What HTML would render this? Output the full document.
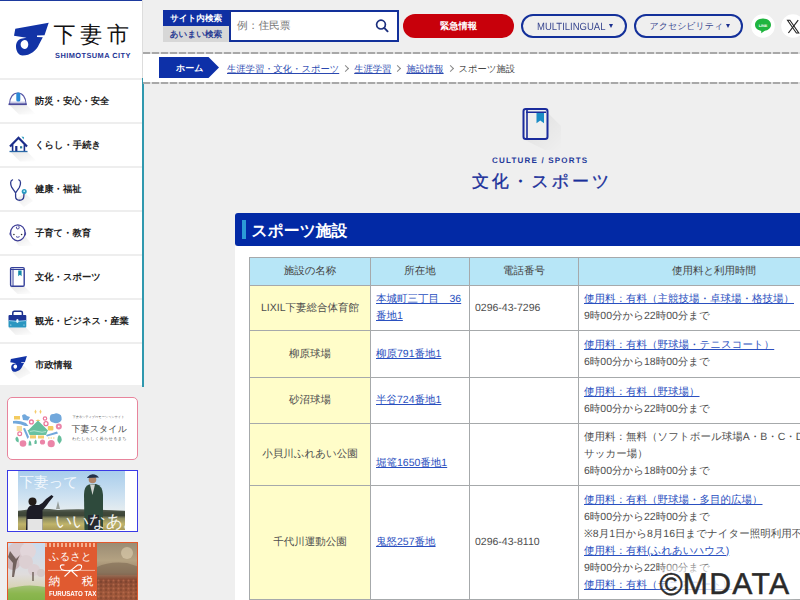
<!DOCTYPE html>
<html><head><meta charset="utf-8">
<style>
*{box-sizing:border-box;margin:0;padding:0}
html,body{width:800px;height:600px;overflow:hidden}
body{text-rendering:geometricPrecision;background:#efefef;font-family:"Liberation Sans",sans-serif;color:#333;position:relative}
.abs{position:absolute}
#side{left:0;top:0;width:142px;height:385px;background:#fff;border-top:1.5px solid #1d3a9e}
#sideline1{left:142px;top:0;width:1px;height:78px;background:#ddd}
#sideline2{left:142px;top:78px;width:1.6px;height:309px;background:#2f98ae}
.mi{position:absolute;left:0;width:142px;height:44px;border-top:2px solid #eee}
.mi span{position:absolute;left:35px;top:14px;font-size:9.3px;font-weight:bold;color:#222;white-space:nowrap;line-height:14px}
.mi svg{position:absolute;left:4px;top:6px}
#hdr .tab1{left:163px;top:10px;width:66px;height:16px;background:#0f2fa3;color:#fff;font-size:8.6px;font-weight:bold;text-align:center;line-height:16px}
#hdr .tab2{left:163px;top:26px;width:66px;height:16px;background:#d7d7d7;color:#2b3d94;font-size:8.6px;font-weight:bold;text-align:center;line-height:16px}
.sbox{left:229px;top:10px;width:170px;height:32px;border:2px solid #12309a;background:#fff}
.sbox span{position:absolute;left:6px;top:6px;font-size:10.7px;color:#777;line-height:16px}
.btn{position:absolute;top:14px;height:24px;border-radius:12px;font-size:11px;line-height:20px;text-align:center;white-space:nowrap}
.red{left:403px;width:111px;background:#c8000b;color:#fff;font-weight:bold;font-size:9.3px;line-height:24px}
.ol{border:2px solid #13309a;color:#3c4b98}
.dash{left:143px;width:657px;height:2px;background:repeating-linear-gradient(90deg,#a8a8a8 0 7px,#dedede 7px 9px)}
#crumb{left:143px;top:54px;width:657px;height:28px;background:#fff}
.crumb a{color:#2a48b0;text-decoration:underline}
table{border-collapse:collapse;table-layout:fixed;font-size:10.5px;color:#4e4e4e}
td,th{border:1px solid #a6a9ab;line-height:17px;padding:0 5px;white-space:nowrap;vertical-align:middle}
th{background:#b7e6f7;font-weight:normal;text-align:center;color:#444}
td.n{background:#fffdc9;text-align:center}
td a{color:#2a50c0;text-decoration:underline}
.chev{display:inline-block;width:5px;height:5px;border-right:1.3px solid #888;border-top:1.3px solid #888;transform:rotate(45deg);margin:0 6px 1px 4px}
.tri{width:0;height:0;border-left:2.8px solid transparent;border-right:2.8px solid transparent;border-top:4.2px solid #1a2f8f}
</style></head><body>

<!-- sidebar -->
<div id="side" class="abs"></div>
<div id="sideline1" class="abs"></div>
<div id="sideline2" class="abs"></div>

<!-- logo -->
<svg class="abs" style="left:10px;top:20px" width="40" height="40" viewBox="0 0 40 40">
<path fill="#1233a6" fill-rule="evenodd" d="M5.3 8.7L38.7 2.7L34.5 15.3L27 15.6L27 17L32.8 17.2L29 24.5C26.5 30.5 20.5 35.5 12.5 35.5C8.5 35.5 6 31 6 26.5C6 22.5 8 19.6 11 18.8L16.5 17.7L4 15.7Z M14.6 20C12.2 20 10.6 22.2 10.6 24.6C10.6 27.1 12.3 28.9 14.5 28.9C16.7 28.9 18.3 26.9 18.3 24.4C18.3 21.9 16.9 20 14.6 20Z"/>
</svg>
<div class="abs" style="left:53.5px;top:21.5px;font-size:22px;letter-spacing:4.8px;color:#111;line-height:26px;white-space:nowrap">下妻市</div>
<div class="abs" style="left:55px;top:50.8px;font-size:7.4px;font-weight:bold;letter-spacing:.45px;color:#1d3595;line-height:10px;white-space:nowrap">SHIMOTSUMA CITY</div>

<!-- menu -->
<div class="mi" style="top:78px"><span>防災・安心・安全</span></div>
<div class="mi" style="top:122px"><span>くらし・手続き</span></div>
<div class="mi" style="top:166px"><span>健康・福祉</span></div>
<div class="mi" style="top:210px"><span>子育て・教育</span></div>
<div class="mi" style="top:254px"><span>文化・スポーツ</span></div>
<div class="mi" style="top:298px"><span>観光・ビジネス・産業</span></div>
<div class="mi" style="top:342px"><span>市政情報</span></div>


<!-- sidebar icons -->
<svg class="abs" style="left:0;top:0" width="143" height="385" viewBox="0 0 143 385">
<defs><linearGradient id="sh" x1="0" y1="0" x2="1" y2="1"><stop offset="0" stop-color="#000" stop-opacity=".10"/><stop offset="1" stop-color="#000" stop-opacity="0"/></linearGradient></defs>
<g fill="url(#sh)">
<path d="M9 104.5L26 104.5L36 114.5L19 114.5Z"/>
<path d="M10 151.5L27 151.5L37 161.5L20 161.5Z"/>
<path d="M16 199L25 193L33 201L24 207Z"/>
<path d="M11 236L25 236L33 246L19 246Z"/>
<path d="M10 286.5L24.5 286.5L32 294L17.5 294Z"/>
<path d="M8.5 327.5L26 327.5L33 335L15.5 335Z"/>
<path d="M12 372L24 366L31 373L19 379Z"/>
</g>
<!-- helmet -->
<path d="M9.5 104C9.5 97.5 13 93 17.8 93C22.6 93 26 97.5 26 104Z" fill="#fff" stroke="#5a5aa8" stroke-width="1.2"/>
<path d="M8.5 104.3H26.8" stroke="#4a4a9a" stroke-width="1.6"/>
<path d="M9.5 102.2H26" stroke="#9aa0d0" stroke-width="0.8"/>
<rect x="16.3" y="92.5" width="4" height="9" rx="1.5" fill="#2a8ad6"/>
<!-- house -->
<path d="M10 146.5L18.5 137.8L27 146.5" fill="none" stroke="#1b2d8a" stroke-width="2.2" stroke-linejoin="miter"/>
<path d="M12.6 144.5V151M24.4 144.5V151" stroke="#1b2d8a" stroke-width="1.6"/>
<path d="M9.5 151.5H27.5" stroke="#2a6aa8" stroke-width="1.3"/>
<rect x="15.2" y="146" width="2.2" height="5.2" fill="#1b2d8a"/>
<rect x="20" y="146.2" width="2.2" height="2.2" fill="#2a7a9a"/>
<path d="M21.5 136.5L24 137L23.5 139.5Z" fill="#2a9ac0"/>
<!-- stethoscope -->
<path d="M12.5 179.8C10 180.5 10.3 184.5 11.8 187.5L15.6 192.8L19.3 187.5C20.8 184.5 21.2 180.5 18.8 179.8M15.6 192.8V196.5C15.6 201.5 23.5 201.5 23.8 196.5L24 193.5" fill="none" stroke="#2e3b8e" stroke-width="1.3" stroke-linecap="round"/>
<circle cx="24.2" cy="191.4" r="2.5" fill="#2a9ac0"/><circle cx="24.2" cy="191.2" r="0.9" fill="#bfefff"/>
<!-- baby -->
<ellipse cx="17.8" cy="232.8" rx="7.2" ry="8" fill="#fff" stroke="#3c3c96" stroke-width="1.2"/>
<path d="M10.7 231.5C9 232.5 9 235 10.7 236Z M24.9 231.5C26.6 232.5 26.6 235 24.9 236Z" fill="#4a4aa0"/>
<path d="M17.2 226.5C16 226.8 16 229 17.8 229C19.5 229 19.6 226.8 18.2 225.5" fill="none" stroke="#3c3c96" stroke-width="1"/>
<circle cx="13.9" cy="234.5" r="0.8" fill="#333"/><circle cx="21.6" cy="234.5" r="0.8" fill="#333"/>
<path d="M16 236.6Q17.8 238 19.6 236.6" fill="none" stroke="#4a4aa0" stroke-width="1"/>
<!-- book -->
<rect x="10.6" y="267.6" width="13.6" height="18.6" rx="1.2" fill="#fff" stroke="#34409a" stroke-width="1.4"/>
<path d="M13 268.5V286M10.8 269.5H24" stroke="#34409a" stroke-width="1"/>
<path d="M18.2 270.5H21.6V276.2L19.9 274.8L18.2 276.2Z" fill="#158aa8"/>
<!-- briefcase -->
<path d="M12.8 315.5V312.8Q12.8 311.2 14.4 311.2H20.8Q22.4 311.2 22.4 312.8V315.5" fill="none" stroke="#1b2f8a" stroke-width="1.5"/>
<path d="M8.5 316Q8.5 315 9.5 315H25.3Q26.3 315 26.3 316V321H8.5Z" fill="#1d3396"/>
<path d="M8.5 320.5H26.3V326.5Q26.3 327.5 25.3 327.5H9.5Q8.5 327.5 8.5 326.5Z" fill="#2a96c0"/>
<path d="M8.5 320.5Q17.4 322.5 26.3 320.5" fill="none" stroke="#bfe6ff" stroke-width="0.7"/>
<ellipse cx="17.4" cy="321" rx="1.2" ry="1.9" fill="#e8f8ff"/>
<circle cx="10.8" cy="325" r="0.6" fill="#e8f8ff"/><circle cx="24" cy="325" r="0.6" fill="#e8f8ff"/>
<!-- small logo -->
<g transform="translate(8.33 354.8) scale(0.48)">
<path fill="#1233a6" fill-rule="evenodd" d="M5.3 8.7L38.7 2.7L34.5 15.3L27 15.6L27 17L32.8 17.2L29 24.5C26.5 30.5 20.5 35.5 12.5 35.5C8.5 35.5 6 31 6 26.5C6 22.5 8 19.6 11 18.8L16.5 17.7L4 15.7Z M14.6 20C12.2 20 10.6 22.2 10.6 24.6C10.6 27.1 12.3 28.9 14.5 28.9C16.7 28.9 18.3 26.9 18.3 24.4C18.3 21.9 16.9 20 14.6 20Z"/>
</g>
</svg>
<!-- banners -->
<div class="abs" style="left:6.5px;top:397px;width:131.5px;height:63px;border:1.6px solid #e8849c;border-radius:5px;background:#fff"></div>
<svg class="abs" style="left:10px;top:405px" width="56" height="45" viewBox="0 0 56 45">
<g opacity=".85">
<path d="M25.5 4.5L26.6 6.7L25.5 9L24.4 6.7Z M30.5 4.5L31.6 6.7L30.5 9L29.4 6.7Z" fill="#f4c454"/>
<path d="M25.5 16Q28 13 30.5 16Z" fill="#f4c454"/>
<path d="M28 15.5L37.5 25H18.5Z" fill="#4cb38c"/>
<path d="M17.5 25H38L36 30H19.5Z" fill="#52b894"/>
<path d="M20 26.5Q24 25 28 26.5Q32 28 36 26.5" fill="none" stroke="#c8f0e0" stroke-width=".7"/>
<rect x="4" y="11" width="6" height="3.5" fill="#f2c244"/>
<path d="M12 10.5Q15 8 17 11L20 12L18 15.5L13 15Z" fill="#5a9ad6"/>
<path d="M3 16Q9 15 16 18L18.5 21L15 21Q10 18 3 18.5Z" fill="#5a9ad6"/>
<circle cx="21.4" cy="16.9" r="1.9" fill="none" stroke="#e8608a" stroke-width="1.3"/>
<circle cx="35" cy="13.5" r="1.7" fill="none" stroke="#e8608a" stroke-width="1.2"/>
<circle cx="36" cy="18.7" r="2" fill="none" stroke="#e8608a" stroke-width="1.3"/>
<path d="M40 12Q40 8.5 44 9Q46 7.5 49 9Q52 10 51.5 13Q52.5 16 49 17.5Q46 19 43 17.5Q39 16.5 40 12Z" fill="#5a9ad6"/>
<rect x="37.8" y="21" width="5.6" height="4.4" rx="1" fill="#f2c244"/>
<circle cx="48.8" cy="21.4" r="3" fill="#e8709a"/><circle cx="48.8" cy="21.4" r=".9" fill="#fff"/>
<path d="M36 30L47 26.5L48 28.5L37 31.5Z" fill="#5a9ad6"/>
<path d="M6.7 21H12V26.2H6.7Z" fill="#f6d88a"/>
<circle cx="9.7" cy="28.8" r="1.9" fill="none" stroke="#e8608a" stroke-width="1.2"/>
<path d="M13 23.5L15 23L19 32L17.5 34Z" fill="#5a9ad6"/>
<path d="M20 30.2H26V33.5H20Z M28 30.5H34V33.5H28Z" fill="#f4c454"/>
<path d="M7 31.5Q9.5 34 8.5 37.5Q5 36.5 5.5 33Z" fill="#4cb38c"/>
<circle cx="13" cy="38.5" r="3.3" fill="#e8709a"/>
<path d="M19.8 35.2Q22 37 21.5 40.5H18.5Q18 37 19.8 35.2Z" fill="#4cb38c"/>
<path d="M25.5 34.5Q27.5 36 26.5 39H24.5Q23.8 36 25.5 34.5Z" fill="#4cb38c"/>
<circle cx="32.5" cy="37" r="2.6" fill="#e8709a"/>
<circle cx="41.2" cy="38.7" r="3.6" fill="#e8709a"/>
<path d="M49 30Q52.5 32 51.5 36L49.5 39L47.5 36Q47 32 49 30Z" fill="#4cb38c"/>
<path d="M38 33H45" stroke="#f4c454" stroke-width="1" stroke-dasharray="1.5 1"/>
</g>
</svg>
<div class="abs" style="left:72.5px;top:414.5px;font-size:3.2px;color:#555;line-height:5px;white-space:nowrap">下妻市シティプロモーションサイト</div>
<div class="abs" style="left:71.5px;top:423px;font-size:9px;color:#444;line-height:12px;white-space:nowrap;letter-spacing:.1px">下妻スタイル</div>
<div class="abs" style="left:72px;top:436px;font-size:4.2px;color:#555;line-height:5px;white-space:nowrap;letter-spacing:.3px">わたしらしく暮らせるまち</div>

<div class="abs" style="left:6.5px;top:470px;width:131.5px;height:62px;border:1.6px solid #3a3ae6;background:#fff;overflow:hidden">
<svg class="abs" style="left:10.4px;top:0" width="107.5" height="59" viewBox="0 0 107.5 59">
<defs><linearGradient id="sky" x1="0" y1="0" x2="0" y2="1">
<stop offset="0" stop-color="#a8cdec"/><stop offset=".45" stop-color="#cfe2f1"/><stop offset=".66" stop-color="#e4ecf0"/><stop offset=".7" stop-color="#6a6e60"/><stop offset=".76" stop-color="#484c3c"/><stop offset=".8" stop-color="#8a8a60"/><stop offset=".9" stop-color="#c0b46a"/><stop offset="1" stop-color="#a89a58"/></linearGradient></defs>
<rect width="107.5" height="59" fill="url(#sky)"/>
<path d="M0 40Q20 36 40 39Q60 37 107.5 40V45H0Z" fill="#3c4436" opacity=".85"/>
<path d="M38 38L40 30L42 38Z" fill="#6a6e64" opacity=".6"/>
<path d="M8 59L8.5 43Q9 35 14.5 34L21 34Q25 32 28 28L33.5 24L35.5 25.5L31 31Q27 37 24.5 39L24.5 59Z" fill="#1c1c26"/>
<path d="M9.5 48H24.5V59H9.5Z" fill="#e4e4e4"/>
<circle cx="14.5" cy="30.5" r="4" fill="#221c18"/>
<path d="M66.5 59L66 24Q66 15 71 13.5L78 13Q84.5 14.5 85 24L85 59Z" fill="#2e4a3c"/>
<path d="M72 13.5L74.5 24L77 13.5Z" fill="#d0d4d0"/>
<path d="M70 59V44H81V59Z" fill="#252a30"/>
<circle cx="74.5" cy="8.5" r="3.8" fill="#b08468"/>
<path d="M69.5 6Q73 1.5 79 4.5L81 6.5L69 7Z" fill="#22304a"/>
<text x="1.5" y="16" font-size="14.5" fill="#fff" fill-opacity=".85" font-family="Liberation Serif, serif">下妻って</text>
<text x="37" y="56" font-size="17" fill="#fff" fill-opacity=".92" font-family="Liberation Serif, serif" letter-spacing="-.5">いいなあ。</text>
</svg>
</div>

<div class="abs" style="left:6.5px;top:542px;width:131.5px;height:70px;border:1.6px solid #e2592c;background:#e05a30;overflow:hidden">
<svg class="abs" style="left:0;top:0" width="37" height="70" viewBox="0 0 37 70">
<defs><linearGradient id="lp" x1="0" y1="0" x2="0" y2="1"><stop offset="0" stop-color="#c8dcf0"/><stop offset=".45" stop-color="#e0dcdc"/><stop offset=".62" stop-color="#d8d4b8"/><stop offset=".72" stop-color="#a8c068"/><stop offset="1" stop-color="#68a030"/></linearGradient></defs>
<rect width="37" height="70" fill="url(#lp)"/>
<circle cx="10" cy="10" r="11" fill="#d8c8cc"/><circle cx="20" cy="8" r="8" fill="#e2d6da"/><circle cx="5" cy="20" r="7" fill="#cbb8bc"/><circle cx="18" cy="19" r="7" fill="#dccfd2"/>
<path d="M2 8L8 16L12 12L9 18L6 34L4 34L5 20L0 14Z" fill="#5a4a44" opacity=".8"/>
<circle cx="26" cy="27" r="6" fill="#ddd0d4"/><circle cx="33" cy="30" r="4" fill="#d4c8c8"/>
<path d="M25 38V29" stroke="#5a4a40" stroke-width="1.2"/>
<path d="M0 46Q18 40 37 44V70H0Z" fill="#7ab040" opacity=".6"/>
</svg>
<svg class="abs" style="left:89.5px;top:0" width="42" height="70" viewBox="0 0 42 70">
<defs><linearGradient id="rp" x1="0" y1="0" x2="0" y2="1"><stop offset="0" stop-color="#9a8c74"/><stop offset=".25" stop-color="#b4a282"/><stop offset=".42" stop-color="#9a8268"/><stop offset=".52" stop-color="#8a4a34"/><stop offset=".75" stop-color="#a0583a"/><stop offset="1" stop-color="#7a4030"/></linearGradient>
<pattern id="fl" width="5" height="4" patternUnits="userSpaceOnUse"><circle cx="1.5" cy="1.5" r="1" fill="#c07050" opacity=".7"/><circle cx="4" cy="3" r=".8" fill="#5a3020" opacity=".6"/></pattern></defs>
<rect width="42" height="70" fill="url(#rp)"/>
<path d="M0 24Q12 18 30 20L42 24V32H0Z" fill="#7a6650" opacity=".55"/>
<circle cx="30" cy="10" r="6" fill="#e0d0b0" opacity=".6"/>
<rect y="36" width="42" height="34" fill="url(#fl)"/>
</svg>
<div class="abs" style="left:37px;top:0;width:52.5px;height:3.5px;background:repeating-linear-gradient(90deg,#f4b090 0 2px,#e05a30 2px 4px)"></div>
<div class="abs" style="left:41.3px;top:6.5px;font-size:10.5px;color:#fff;line-height:14px;white-space:nowrap">ふるさと</div>
<svg class="abs" style="left:37px;top:19px" width="52.5" height="16" viewBox="0 0 52.5 16"><path d="M3 8.4H50" stroke="#fbd8c8" stroke-width=".7"/><path d="M19.5 3Q13 2 16.5 7.5Q21.5 9.5 26 8.4Q30.5 9.5 35.5 7.5Q39 2 32.5 3L26 8.4L19.5 14.5M26 8.4L32.5 14.5" fill="none" stroke="#fff" stroke-width="1.1"/></svg>
<div class="abs" style="left:41.3px;top:32px;font-size:11.5px;color:#fff;line-height:14px;white-space:nowrap;letter-spacing:21.5px">納税</div>
<div class="abs" style="left:41.5px;top:47px;font-size:7.2px;font-weight:bold;color:#fff;line-height:8px;white-space:nowrap;transform-origin:0 0;transform:scaleX(.86)">FURUSATO TAX</div>
</div>

<!-- header -->
<div id="hdr">
<div class="abs tab1">サイト内検索</div>
<div class="abs tab2">あいまい検索</div>
<div class="abs sbox"><span>例：住民票</span>
<svg class="abs" style="left:142px;top:6px" width="16" height="16" viewBox="0 0 16 16"><circle cx="8" cy="6.6" r="4.4" fill="none" stroke="#1b2f7e" stroke-width="1.7"/><path d="M11.2 9.9L14.6 13.3" stroke="#1b2f7e" stroke-width="1.9" stroke-linecap="round"/></svg>
</div>
<div class="btn red">緊急情報</div>
<div class="btn ol" style="left:521px;width:106px"></div><div class="abs" style="left:536.5px;top:20px;font-size:10.4px;color:#3a4890;line-height:16px;white-space:nowrap;transform-origin:0 50%;transform:scaleX(.915)">MULTILINGUAL</div><div class="tri abs" style="left:608.8px;top:24px"></div>
<div class="btn ol" style="left:634px;width:109px"></div><div class="abs" style="left:649.5px;top:18px;font-size:9px;color:#3a4890;line-height:16px;white-space:nowrap">アクセシビリティ</div><div class="tri abs" style="left:725.5px;top:24px"></div>
<svg class="abs" style="left:748px;top:11px" width="52" height="30" viewBox="0 0 52 30">
<circle cx="15" cy="15" r="11.8" fill="#fff"/>
<path d="M15 7.5C10.3 7.5 7 10.3 7 13.8C7 17 9.6 19.3 13.2 19.9L13.3 22.3L16.4 19.9C20.4 19.5 23 17 23 13.8C23 10.3 19.7 7.5 15 7.5Z" fill="#1fb53f"/>
<text x="15" y="15.6" font-size="3.8" font-weight="bold" fill="#fff" text-anchor="middle" font-family="Liberation Sans, sans-serif">LINE</text>
<circle cx="45" cy="15" r="11.8" fill="#fff"/>
<path d="M39.5 9.2H41.9L50.8 22H48.4Z" fill="none" stroke="#222" stroke-width="1.05"/>
<path d="M50.2 9.2L40.4 22" stroke="#222" stroke-width="1.15"/>
</svg>
</div>

<!-- breadcrumb -->
<div class="abs dash" style="top:52px"></div>
<div id="crumb" class="abs"></div>
<div class="abs" style="left:159px;top:57px;width:60px;height:21px;background:#0d30a8;clip-path:polygon(0 0,49.5px 0,60px 50%,49.5px 100%,0 100%)"></div>
<div class="abs" style="left:176px;top:60.7px;font-size:9px;font-weight:bold;color:#fff;line-height:14px;white-space:nowrap">ホーム</div>
<div class="abs crumb" style="left:227px;top:61.5px;font-size:9.3px;line-height:14px;white-space:nowrap;color:#444"><a>生涯学習・文化・スポーツ</a><span class="chev"></span><a>生涯学習</a><span class="chev"></span><a>施設情報</a><span class="chev"></span>スポーツ施設</div>
<div class="abs dash" style="top:82px"></div>

<!-- main title -->
<svg class="abs" style="left:515px;top:100px" width="60" height="60" viewBox="0 0 60 60">
<defs><linearGradient id="bsh" x1="0" y1="0" x2="1" y2="1"><stop offset="0" stop-color="#000" stop-opacity=".07"/><stop offset="1" stop-color="#000" stop-opacity="0"/></linearGradient></defs>
<path d="M33 13L46 26L46 50L30 50L10 40L33 40Z" fill="url(#bsh)"/>
<rect x="8.5" y="9" width="24" height="30" rx="2.3" fill="none" stroke="#1a2b9c" stroke-width="2"/>
<path d="M12 10V39M11 12.2H31" stroke="#1a2b9c" stroke-width="1.6"/>
<path d="M21.5 13H29V23.2L25.25 20.5L21.5 23.2Z" fill="#1a8cc6"/>
</svg>
<div class="abs" style="left:492px;top:156.2px;font-size:8px;font-weight:bold;letter-spacing:1.2px;color:#1f3a9a;line-height:10px;white-space:nowrap">CULTURE / SPORTS</div>
<div class="abs" style="left:472px;top:171px;font-size:17px;letter-spacing:2.85px;-webkit-text-stroke:.35px #1a2f9a;color:#1a2f9a;line-height:22px;white-space:nowrap">文化・スポーツ</div>

<!-- section -->
<div class="abs" style="left:235px;top:246px;width:600px;height:400px;background:#fff"></div>
<div class="abs" style="left:235px;top:213px;width:600px;height:33px;background:#0229a5;border-radius:3px"></div>
<div class="abs" style="left:241.5px;top:220px;width:4.5px;height:19px;background:#2b9bd6"></div>
<div class="abs" style="left:251.5px;top:221px;font-size:15.8px;font-weight:bold;color:#fff;line-height:22px;white-space:nowrap">スポーツ施設</div>

<table class="abs" style="left:249px;top:257px;width:600px">
<colgroup><col style="width:121px"><col style="width:99px"><col style="width:109px"><col style="width:271px"></colgroup>
<tr style="height:28px"><th>施設の名称</th><th>所在地</th><th>電話番号</th><th>使用料と利用時間</th></tr>
<tr style="height:45px"><td class="n">LIXIL下妻総合体育館</td><td><a>本城町三丁目　36</a><br><a>番地1</a></td><td>0296-43-7296</td><td><a>使用料：有料（主競技場・卓球場・格技場）</a><br>9時00分から22時00分まで</td></tr>
<tr style="height:47px"><td class="n">柳原球場</td><td><a>柳原791番地1</a></td><td></td><td><a>使用料：有料（野球場・テニスコート）</a><br>6時00分から18時00分まで</td></tr>
<tr style="height:46px"><td class="n">砂沼球場</td><td><a>半谷724番地1</a></td><td></td><td><a>使用料：有料（野球場）</a><br>6時00分から22時00分まで</td></tr>
<tr style="height:62px"><td class="n">小貝川ふれあい公園</td><td><br><a>堀篭1650番地1</a></td><td></td><td>使用料：無料（ソフトボール球場A・B・C・D<br>サッカー場）<br>6時00分から18時00分まで</td></tr>
<tr style="height:114px"><td class="n">千代川運動公園</td><td><a>鬼怒257番地</a></td><td>0296-43-8110</td><td><a>使用料：有料（野球場・多目的広場）</a><br>6時00分から22時00分まで<br>※8月1日から8月16日までナイター照明利用不可<br><a>使用料：有料(ふれあいハウス)</a><br>9時00分から22時00分まで<br><a>使用料：有料（テニスコート）</a></td></tr>
</table>

<div class="abs" style="left:664px;top:566px;width:126px;height:32px;background:rgba(255,255,255,.75);filter:blur(5px)"></div>
<div class="abs" style="left:659.5px;top:566px;font-size:30.2px;color:#2a2a2a;line-height:34px;white-space:nowrap;-webkit-text-stroke:.45px #2a2a2a"><span style="font-size:31.5px;position:relative;top:1px">©</span><span style="letter-spacing:1.3px">MDATA</span></div>
</body></html>
